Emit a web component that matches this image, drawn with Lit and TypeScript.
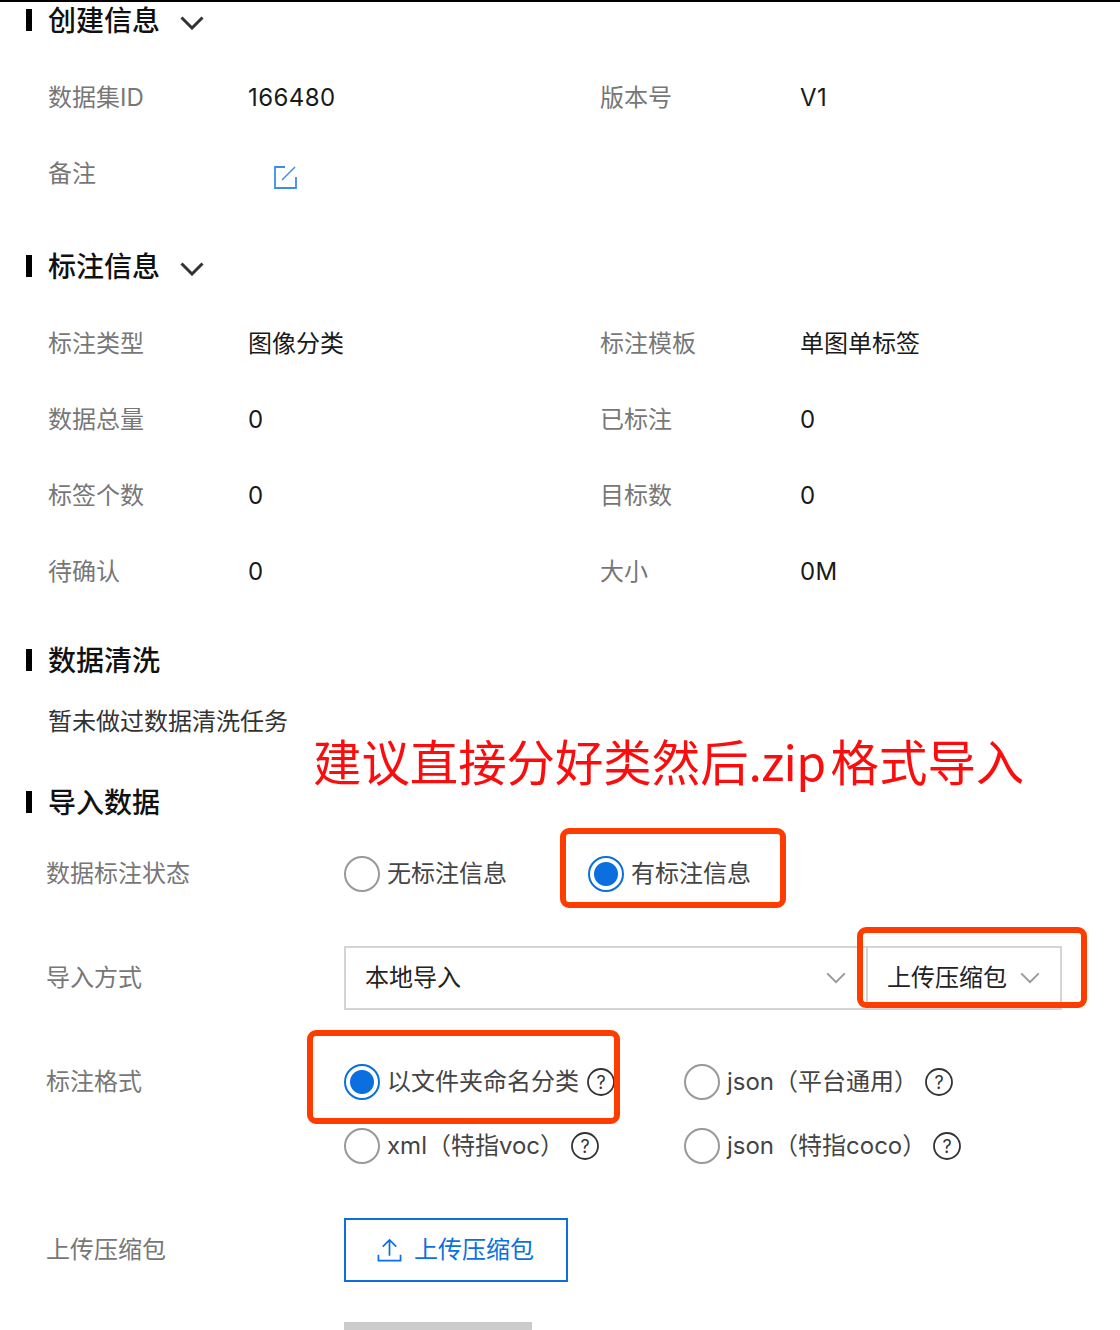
import { LitElement, html, css } from "lit";
import { customElement } from "lit/decorators.js";

const chevron = (cls: string) => html`<svg class=${cls} viewBox="0 0 24 14" fill="none" stroke="currentColor"><path d="M1.5 1.5 12 12 22.5 1.5"/></svg>`;
const help = html`<svg class="help" viewBox="0 0 28 28" fill="none"><circle cx="14" cy="14" r="13" stroke="#333" stroke-width="1.8"/><text x="14" y="20.5" text-anchor="middle" font-size="18" fill="#333" font-family="Inter, sans-serif">?</text></svg>`;

@customElement("app-root")
export class AppRoot extends LitElement {
  static styles = css`
    :host { display: block; width: 1120px; height: 1330px; overflow: hidden; position: relative; background: #fff; box-sizing: border-box; border-top: 2px solid #000; font-family: Inter, "Noto Sans CJK SC", sans-serif; font-size: 24px; color: #1a1a1a; }
    .heading { display: flex; align-items: center; height: 36px; padding-left: 26px; font-size: 28px; font-weight: 500; color: #111; font-family: "Noto Sans CJK SC", sans-serif; }
    .heading::before { content: ""; width: 6px; height: 22px; background: #000; margin-right: 16px; }
    .heading span { padding-bottom: 2px; }
    .heading .chev { width: 24px; height: 14px; margin: 5px 0 0 20px; color: #333; stroke-width: 3; }
    .h2 { margin-top: 37px; } .h3 { margin-top: 33px; } .h4 { margin-top: 44px; }
    .grid { display: grid; grid-template-columns: 552px 520px; padding-left: 48px; margin-top: 21px; }
    .pair { display: flex; align-items: center; height: 76px; }
    .pair .k { width: 200px; color: #777; padding-bottom: 4px; }
    .pair .v { letter-spacing: 0.4px; }
    .pair .v.cjk { letter-spacing: 0; padding-bottom: 4px; }
    .edit { width: 26px; height: 26px; margin: 8px 0 0 24px; }
    .clean { padding-left: 48px; margin-top: 26px; height: 36px; line-height: 36px; color: #333; }
    .form { padding-left: 46px; margin-top: 22px; }
    .row { display: flex; align-items: center; }
    .row .k { width: 298px; color: #777; flex: none; padding-bottom: 6px; }
    .r1 { height: 64px; }
    .r2 { height: 64px; margin-top: 40px; }
    .r3 { height: 128px; margin-top: 40px; align-items: flex-start; }
    .row.r3 .k { line-height: 64px; padding-bottom: 0; }
    .r5 { height: 64px; margin-top: 40px; }
    .radios { display: flex; gap: 81px; }
    .radio { display: flex; align-items: center; height: 64px; color: #444; }
    .dot { width: 36px; height: 36px; box-sizing: border-box; border-radius: 50%; border: 2px solid #999; margin-right: 7px; flex: none; }
    .dot.on { border-color: #0b6fe0; background: radial-gradient(circle, #0b6fe0 0 11.5px, #fff 12.5px); }
    .fmt { display: grid; grid-template-columns: 340px 340px; }
    .help { width: 28px; height: 28px; margin-left: 8px; flex: none; }
    .hint { display: flex; }
    .hint.wide { margin-left: -1px; }
    .t { padding-bottom: 6px; }
    .select { display: flex; height: 64px; width: 718px; box-sizing: border-box; border: 2px solid #d4d4d4; align-items: center; color: #222; }
    .select .main { flex: 1; display: flex; align-items: center; justify-content: space-between; padding: 0 0 0 19px; height: 100%; }
    .select .sub { width: 194px; box-sizing: border-box; display: flex; align-items: center; justify-content: space-between; padding: 0 20px 0 19px; height: 100%; border-left: 2px solid #d4d4d4; }
    .select .chev { width: 20px; height: 12px; color: #999; stroke-width: 2.4; }
    .select .main .chev { margin-right: 20px; }
    .btn { width: 224px; height: 64px; box-sizing: border-box; border: 2px solid #0b6fe0; color: #0b6fe0; display: flex; align-items: center; padding-left: 31px; gap: 12px; }
    .btn svg { width: 25px; height: 26px; }
    .bar { width: 188px; height: 20px; background: #ccc; margin: 40px 0 0 298px; }
    .note { position: absolute; left: 313px; top: 725px; font-size: 48.4px; line-height: 66px; color: #fb0d0d; white-space: nowrap; font-family: "Noto Sans CJK SC", sans-serif; }
    .note span { letter-spacing: -0.7px; margin-right: -5px; }
    .mark { position: absolute; box-sizing: border-box; border: 6px solid #fe3c00; border-radius: 9px; }
    .m1 { left: 560px; top: 826px; width: 226px; height: 80px; }
    .m2 { left: 857px; top: 925px; width: 230px; height: 81px; }
    .m3 { left: 307px; top: 1028px; width: 313px; height: 94px; }
  `;

  private pair(k: string, v: string, cjk = false) {
    return html`<div class="pair"><div class="k">${k}</div><div class="v ${cjk ? "cjk" : ""}">${v}</div></div>`;
  }

  private radio(label: string, on = false, hint = "") {
    return html`<div class="radio"><span class="dot ${on ? "on" : ""}"></span><span class="t">${label}</span>${hint ? html`<span class="hint ${hint}">${help}</span>` : ""}</div>`;
  }

  render() {
    return html`
      <div class="heading"><span>创建信息</span>${chevron("chev")}</div>
      <div class="grid">
        ${this.pair("数据集ID", "166480")}
        ${this.pair("版本号", "V1")}
        <div class="pair"><div class="k">备注</div><svg class="edit" viewBox="0 0 26 26" fill="none" stroke="#3b8cf0" stroke-width="1.8"><path d="M13 3H3v21h21V13"/><path d="M10 16 23 3" stroke-width="1.5"/></svg></div>
      </div>
      <div class="heading h2"><span>标注信息</span>${chevron("chev")}</div>
      <div class="grid">
        ${this.pair("标注类型", "图像分类", true)}
        ${this.pair("标注模板", "单图单标签", true)}
        ${this.pair("数据总量", "0")}
        ${this.pair("已标注", "0")}
        ${this.pair("标签个数", "0")}
        ${this.pair("目标数", "0")}
        ${this.pair("待确认", "0")}
        ${this.pair("大小", "0M")}
      </div>
      <div class="heading h3"><span>数据清洗</span></div>
      <div class="clean">暂未做过数据清洗任务</div>
      <div class="heading h4"><span>导入数据</span></div>
      <div class="form">
        <div class="row r1">
          <div class="k">数据标注状态</div>
          <div class="radios">${this.radio("无标注信息")}${this.radio("有标注信息", true)}</div>
        </div>
        <div class="row r2">
          <div class="k">导入方式</div>
          <div class="select">
            <div class="main"><span class="t">本地导入</span>${chevron("chev")}</div>
            <div class="sub"><span class="t">上传压缩包</span>${chevron("chev")}</div>
          </div>
        </div>
        <div class="row r3">
          <div class="k">标注格式</div>
          <div class="fmt">
            ${this.radio("以文件夹命名分类", true, "tight")}
            ${this.radio("json（平台通用）", false, "wide")}
            ${this.radio("xml（特指voc）", false, "wide")}
            ${this.radio("json（特指coco）", false, "wide")}
          </div>
        </div>
        <div class="row r5">
          <div class="k">上传压缩包</div>
          <div class="btn">
            <svg viewBox="0 0 26 26" fill="none" stroke="#0b6fe0" stroke-width="1.8"><path d="M13 19V3M6 9.5 13 2.5 20 9.5M1.5 18v6h23v-6"/></svg>
            <span class="t">上传压缩包</span>
          </div>
        </div>
        <div class="bar"></div>
      </div>
      <div class="note">建议直接分好类然后<span>.zip </span>格式导入</div>
      <div class="mark m1"></div>
      <div class="mark m2"></div>
      <div class="mark m3"></div>
    `;
  }
}
